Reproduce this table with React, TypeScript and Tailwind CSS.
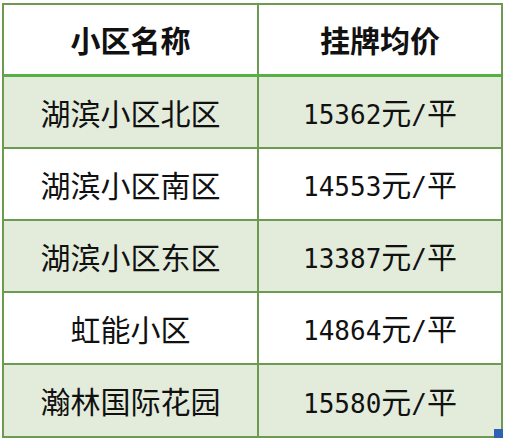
import React from "react";

const rows = [
  { name: "湖滨小区北区", price: "15362", shaded: true },
  { name: "湖滨小区南区", price: "14553", shaded: false },
  { name: "湖滨小区东区", price: "13387", shaded: true },
  { name: "虹能小区", price: "14864", shaded: false },
  { name: "瀚林国际花园", price: "15580", shaded: true },
];

const cjk = { fontFamily: '"Noto Sans CJK SC", "Noto Sans", sans-serif' };
const mono = { fontFamily: '"DejaVu Sans Mono", "Liberation Mono", monospace' };

function Price({ value }: { value: string }) {
  return (
    <span className="flex items-baseline text-[#111]">
      <span className="text-[26px]" style={mono}>{value}</span>
      <span className="text-[30px]" style={cjk}>元</span>
      <span className="text-[26px]" style={mono}>/</span>
      <span className="text-[30px]" style={cjk}>平</span>
    </span>
  );
}

export default function App() {
  return (
    <div className="w-[508px] h-[442px] bg-white pl-[2px] pt-[3px]" style={cjk}>
      <div className="relative w-[501px] border-2 border-[#6c9a50]">
        {/* header */}
        <div className="grid grid-cols-[255px_1fr] h-[72px] border-b-[3px] border-[#56b043] bg-white">
          <div className="flex items-center justify-center border-r-2 border-[#6c9a50] text-[30px] font-bold text-[#111]">
            小区名称
          </div>
          <div className="flex items-center justify-center text-[30px] font-bold text-[#111]">
            挂牌均价
          </div>
        </div>

        {rows.map((r, i) => (
          <div
            key={r.name}
            className={
              "grid grid-cols-[255px_1fr] " +
              (i === rows.length - 1 ? "h-[71px] " : "h-[72px] border-b-2 border-[#6c9a50] ") +
              (r.shaded ? "bg-[#e3ebdb]" : "bg-white")
            }
          >
            <div className="flex items-center justify-center border-r-2 border-[#6c9a50] text-[30px] text-[#111]">
              {r.name}
            </div>
            <div className="flex items-center justify-center">
              <Price value={r.price} />
            </div>
          </div>
        ))}

        {/* excel fill handle */}
        <div className="absolute right-[-2px] bottom-[-2px] w-[9px] h-[9px] bg-[#2f62b5]" />
      </div>
    </div>
  );
}
